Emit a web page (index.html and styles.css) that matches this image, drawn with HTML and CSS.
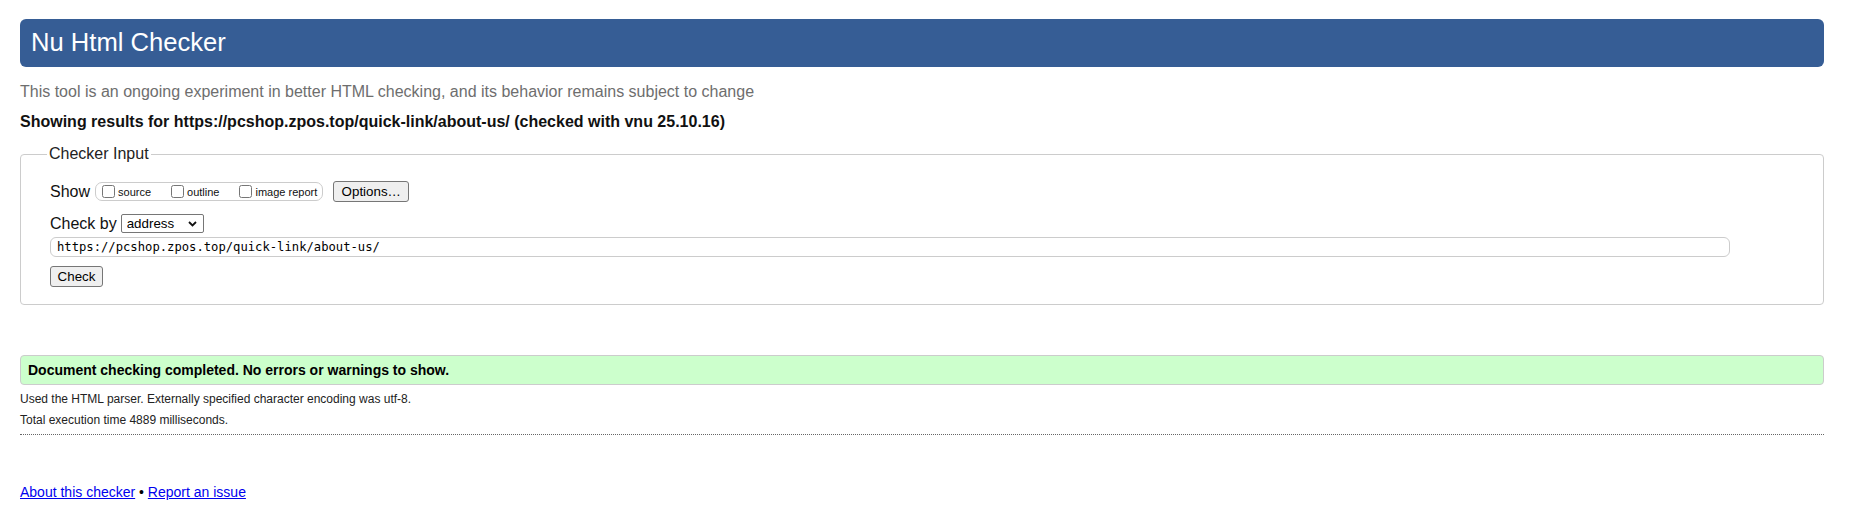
FILE: index.html
```html
<!DOCTYPE html>
<html lang="en">
<head>
<meta charset="utf-8">
<title>Showing results for https://pcshop.zpos.top/quick-link/about-us/ - Nu Html Checker</title>
<link rel="stylesheet" href="styles.css">
</head>
<body>
<h1 class="title">Nu Html Checker</h1>
<p class="tagline">This tool is an ongoing experiment in better HTML checking, and its behavior remains subject to change</p>
<p class="showing">Showing results for https://pcshop.zpos.top/quick-link/about-us/ (checked with vnu 25.10.16)</p>
<fieldset class="input-box">
  <legend class="input-legend">Checker Input</legend>
  <div class="row row-show">
    <span class="row-label">Show</span>
    <span class="opts">
      <label class="opt"><input type="checkbox" class="cb"><span>source</span></label>
      <label class="opt"><input type="checkbox" class="cb"><span>outline</span></label>
      <label class="opt"><input type="checkbox" class="cb"><span>image report</span></label>
    </span>
    <button type="button" class="btn btn-options">Options…</button>
  </div>
  <div class="row row-by">
    <span class="row-label">Check by</span>
    <span class="select-wrap">
      <select class="sel"><option>address</option><option>file upload</option><option>text input</option></select>
      <svg class="chev" width="9" height="6" viewBox="0 0 9 6"><path d="M1 1 L4.5 4.5 L8 1" fill="none" stroke="#111" stroke-width="1.8"/></svg>
    </span>
  </div>
  <div class="row row-url">
    <input class="url" type="text" value="https://pcshop.zpos.top/quick-link/about-us/">
  </div>
  <div class="row row-submit">
    <button type="button" class="btn btn-check">Check</button>
  </div>
</fieldset>
<p class="success">Document checking completed. No errors or warnings to show.</p>
<p class="details">Used the HTML parser. Externally specified character encoding was utf-8.</p>
<p class="details">Total execution time 4889 milliseconds.</p>
<hr class="rule">
<p class="footer"><a href="#">About this checker</a> • <a href="#">Report an issue</a></p>
</body>
</html>
```

FILE: styles.css
```css
html {
  background: #fff;
}
body {
  margin: 0;
  padding: 19px 28px 0 20px;
  font-family: "Liberation Sans", Arial, sans-serif;
  color: #000;
  font-size: 16px;
}
.title {
  margin: 0;
  height: 48px;
  box-sizing: border-box;
  padding: 9px 11px;
  background: #365d95;
  color: #fff;
  border-radius: 6px;
  font-size: 25.6px;
  font-weight: normal;
  line-height: normal;
}
.tagline {
  margin: 16px 0 0;
  color: #6e6e6e;
  font-size: 16px;
}
.showing {
  margin: 12px 0 0;
  font-weight: bold;
  font-size: 16px;
  color: #111;
}
.input-box {
  margin: 14px 0 0;
  padding: 18px 28px 17px 29px;
  border: 1px solid #ccc;
  border-radius: 4px;
  min-width: 0;
}
.input-legend {
  margin-left: -3px;
  padding: 0 2px;
  font-size: 16px;
  color: #222;
}
.row {
  display: flex;
  align-items: center;
}
.row-show {
  height: 21px;
}
.row-label {
  font-size: 16px;
  color: #111;
}
.opts {
  display: inline-flex;
  align-items: center;
  gap: 16px;
  margin-left: 5px;
  padding: 0 5px 0 2px;
  height: 19px;
  box-sizing: border-box;
  border: 1px solid #ccc;
  border-radius: 7px;
}
.opt {
  display: inline-flex;
  align-items: center;
  font-size: 11px;
  color: #111;
}
.cb {
  width: 13px;
  height: 13px;
  margin: 0 3px 0 4px;
}
.btn {
  font-family: "Liberation Sans", Arial, sans-serif;
  font-size: 13.333px;
  color: #000;
  background: #efefef;
  border: 1px solid #767676;
  border-radius: 3px;
  height: 21px;
  padding: 0 6px;
  box-sizing: border-box;
}
.btn-options {
  margin-left: 10px;
  width: 76px;
}
.row-by {
  margin-top: 12px;
  height: 19px;
}
.select-wrap {
  position: relative;
  margin-left: 4px;
  display: inline-flex;
}
.sel {
  appearance: none;
  -webkit-appearance: none;
  width: 83px;
  height: 19px;
  box-sizing: border-box;
  border: 1px solid #767676;
  border-radius: 2px;
  background: #fff;
  font-family: "Liberation Sans", Arial, sans-serif;
  font-size: 13.333px;
  color: #000;
  padding: 0 0 0 5px;
  margin: 0;
}
.chev {
  position: absolute;
  right: 7px;
  top: 7px;
  pointer-events: none;
}
.row-url {
  margin-top: 4px;
}
.url {
  width: 96.3%;
  height: 20px;
  box-sizing: border-box;
  margin: 0;
  border: 1px solid #ccc;
  border-radius: 6px;
  padding: 0 6px;
  font-family: "DejaVu Sans Mono", "Liberation Mono", monospace;
  font-size: 12.2px;
  color: #000;
  background: #fff;
}
.row-submit {
  margin-top: 9px;
}
.btn-check {
  margin-left: 0;
  width: 53px;
}
.success {
  margin: 50px 0 0;
  padding: 6px 7px;
  background: #cfc;
  border: 1px solid #ccc;
  border-radius: 4px;
  font-size: 14px;
  font-weight: bold;
  color: #000;
}
.details {
  margin: 7px 0;
  font-size: 12px;
  color: #222;
}
.rule {
  margin: 7px 0 0;
  border: 0;
  border-top: 1px dotted #666;
  height: 0;
}
.footer {
  margin: 49px 0 0;
  font-size: 14px;
}
.footer a {
  color: #00e;
}
```
